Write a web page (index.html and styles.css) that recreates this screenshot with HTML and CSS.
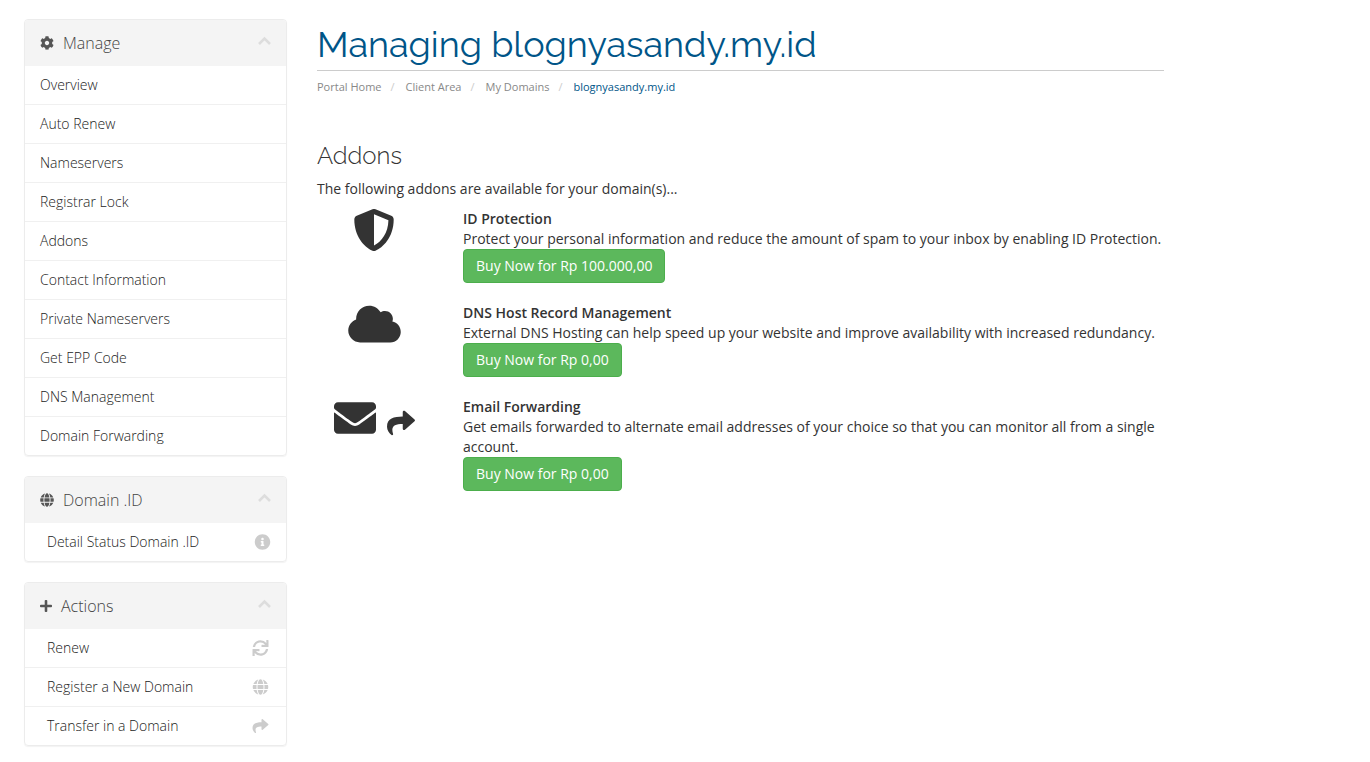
FILE: index.html
```
<!DOCTYPE html>
<html lang="en">
<head>
    <meta charset="UTF-8">
    <meta name="viewport" content="width=device-width, initial-scale=1.0">
    <title>Managing blognyasandy.my.id</title>
    <link rel="stylesheet" href="styles.css">
</head>
<body>

    <!-- shared icons -->
    <svg class="sprite" aria-hidden="true">
        <symbol id="cog" viewBox="0 0 512 512"><path d="M487.4 315.7l-42.6-24.6c4.3-23.2 4.3-47 0-70.2l42.6-24.6c4.9-2.8 7.1-8.6 5.5-14-11.1-35.6-30-67.8-54.7-94.6-3.8-4.1-10-5.1-14.8-2.3L380.8 110c-17.9-15.4-38.5-27.3-60.8-35.1V25.8c0-5.6-3.9-10.5-9.4-11.7-36.7-8.2-74.3-7.8-109.2 0-5.5 1.2-9.4 6.1-9.4 11.7V75c-22.2 7.9-42.8 19.8-60.8 35.1L88.7 85.5c-4.9-2.8-11-1.9-14.8 2.3-24.7 26.7-43.6 58.9-54.7 94.6-1.7 5.4.6 11.2 5.5 14L67.3 221c-4.3 23.2-4.3 47 0 70.2l-42.6 24.6c-4.9 2.8-7.1 8.6-5.5 14 11.1 35.6 30 67.8 54.7 94.6 3.8 4.1 10 5.1 14.8 2.3l42.6-24.6c17.9 15.4 38.5 27.3 60.8 35.1v49.2c0 5.6 3.9 10.5 9.4 11.7 36.7 8.2 74.3 7.8 109.2 0 5.5-1.2 9.4-6.1 9.4-11.7v-49.2c22.2-7.9 42.8-19.8 60.8-35.1l42.6 24.6c4.9 2.8 11 1.9 14.8-2.3 24.7-26.7 43.6-58.9 54.7-94.6 1.5-5.5-.7-11.3-5.6-14.1zM256 336c-44.1 0-80-35.9-80-80s35.9-80 80-80 80 35.9 80 80-35.9 80-80 80z"/></symbol>
        <symbol id="globe" viewBox="0 0 496 512"><path d="M336.5 160C322 70.7 287.8 8 248 8s-74 62.7-88.5 152h177zM152 256c0 22.2 1.2 43.5 3.3 64h185.3c2.1-20.5 3.3-41.8 3.3-64s-1.2-43.5-3.3-64H155.3c-2.1 20.5-3.3 41.8-3.3 64zm324.7-96c-28.6-67.9-86.5-120.4-158-141.6 24.4 33.8 41.2 84.7 50 141.6h108zM177.2 18.4C105.8 39.6 47.8 92.1 19.3 160h108c8.7-56.9 25.5-107.8 49.9-141.6zM487.4 192H372.7c2.1 21 3.3 42.5 3.3 64s-1.2 43-3.3 64h114.6c5.5-20.5 8.6-41.8 8.6-64s-3.1-43.5-8.5-64zM120 256c0-21.5 1.2-43 3.3-64H8.6C3.2 212.5 0 233.8 0 256s3.2 43.5 8.6 64h114.6c-2-21-3.2-42.5-3.2-64zm39.5 96c14.5 89.3 48.7 152 88.5 152s74-62.7 88.5-152h-177zm159.3 141.6c71.4-21.2 129.4-73.7 158-141.6h-108c-8.8 56.9-25.6 107.8-50 141.6zM19.3 352c28.6 67.9 86.5 120.4 158 141.6-24.4-33.8-41.2-84.7-50-141.6h-108z"/></symbol>
        <symbol id="plus" viewBox="0 0 448 512"><path d="M416 208H272V64c0-17.67-14.33-32-32-32h-32c-17.67 0-32 14.33-32 32v144H32c-17.67 0-32 14.33-32 32v32c0 17.67 14.33 32 32 32h144v144c0 17.67 14.33 32 32 32h32c17.67 0 32-14.33 32-32V304h144c17.67 0 32-14.33 32-32v-32c0-17.67-14.33-32-32-32z"/></symbol>
        <symbol id="chevron" viewBox="0 0 14 14"><path d="M2 10l5.5-5.5L13 10" fill="none" stroke="currentColor" stroke-width="2.6"/></symbol>
        <symbol id="info" viewBox="0 0 512 512"><path d="M256 8C119.043 8 8 119.083 8 256c0 136.997 111.043 248 248 248s248-111.003 248-248C504 119.083 392.957 8 256 8zm0 110c23.196 0 42 18.804 42 42s-18.804 42-42 42-42-18.804-42-42 18.804-42 42-42zm56 254c0 6.627-5.373 12-12 12h-88c-6.627 0-12-5.373-12-12v-24c0-6.627 5.373-12 12-12h12v-64h-12c-6.627 0-12-5.373-12-12v-24c0-6.627 5.373-12 12-12h64c6.627 0 12 5.373 12 12v100h12c6.627 0 12 5.373 12 12v24z"/></symbol>
        <symbol id="sync" viewBox="0 0 512 512"><path d="M440.65 12.57l4 82.77A247.16 247.16 0 0 0 255.83 8C134.73 8 33.91 94.92 12.29 209.82A12 12 0 0 0 24.09 224h49.05a12 12 0 0 0 11.67-9.26 175.91 175.91 0 0 1 317-56.94l-101.46-4.86a12 12 0 0 0-12.57 12v47.41a12 12 0 0 0 12 12H500a12 12 0 0 0 12-12V12a12 12 0 0 0-12-12h-47.37a12 12 0 0 0-11.98 12.57zM255.83 432a175.61 175.61 0 0 1-146-77.8l101.8 4.87a12 12 0 0 0 12.57-12v-47.4a12 12 0 0 0-12-12H12a12 12 0 0 0-12 12V500a12 12 0 0 0 12 12h47.35a12 12 0 0 0 12-12.6l-4.15-82.57A247.17 247.17 0 0 0 255.83 504c121.11 0 221.93-86.92 243.55-201.82a12 12 0 0 0-11.8-14.18h-49.05a12 12 0 0 0-11.67 9.26A175.86 175.86 0 0 1 255.83 432z"/></symbol>
        <symbol id="share" viewBox="0 0 512 512"><path d="M503.691 189.836L327.687 37.851C312.281 24.546 288 35.347 288 56.015v80.053C127.371 137.907 0 170.1 0 322.326c0 61.441 39.581 122.309 83.333 154.132 13.653 9.931 33.111-2.533 28.077-18.631C66.066 312.814 132.917 274.316 288 272.085V360c0 20.7 24.3 31.453 39.687 18.164l176.004-152c11.071-9.562 11.086-26.753 0-36.328z"/></symbol>
        <symbol id="shield" viewBox="0 0 512 512"><path d="M466.5 83.7l-192-80a48.15 48.15 0 0 0-36.9 0l-192 80C27.7 91.1 16 108.6 16 128c0 198.5 114.5 335.7 221.5 380.3 11.8 4.9 25.1 4.9 36.9 0C360.1 472.6 496 349.3 496 128c0-19.4-11.7-36.9-29.5-44.3zM256.1 446.3l-.1-381 175.9 73.3c-3.3 151.4-82.1 261.1-175.8 307.7z"/></symbol>
        <symbol id="cloud" viewBox="0 0 640 512"><path d="M537.6 226.6c4.1-10.7 6.4-22.4 6.4-34.6 0-53-43-96-96-96-19.7 0-38.1 6-53.3 16.2C367 64.2 315.3 32 256 32c-88.4 0-160 71.6-160 160 0 2.7.1 5.4.2 8.1C40.2 219.8 0 273.2 0 336c0 79.5 64.5 144 144 144h368c70.7 0 128-57.3 128-128 0-61.9-44-113.6-102.4-125.4z"/></symbol>
        <symbol id="envelope" viewBox="0 0 512 512"><path d="M502.3 190.8c3.9-3.1 9.7-.2 9.7 4.7V400c0 26.5-21.5 48-48 48H48c-26.5 0-48-21.5-48-48V195.6c0-5 5.7-7.8 9.7-4.7 22.4 17.4 52.1 39.5 154.1 113.6 21.1 15.4 56.7 47.8 92.2 47.6 35.7.3 72-32.8 92.3-47.6 102-74.1 131.6-96.3 154-113.7zM256 320c23.2.4 56.6-29.2 73.4-41.4 132.7-96.3 142.8-104.7 173.4-128.7 5.8-4.5 9.2-11.5 9.2-18.9v-19c0-26.5-21.5-48-48-48H48c-26.5 0-48 21.5-48 48v19c0 7.4 3.4 14.3 9.2 18.9 30.6 23.9 40.7 32.4 173.4 128.7 16.8 12.2 50.2 41.8 73.4 41.4z"/></symbol>
    </svg>

    <div class="container">
        <aside class="sidebar">
            <section class="panel">
                <h3 class="panel-heading"><svg class="icon"><use href="#cog"/></svg>Manage<svg class="chevron"><use href="#chevron"/></svg></h3>
                <nav class="list">
                    <a href="#">Overview</a>
                    <a href="#">Auto Renew</a>
                    <a href="#">Nameservers</a>
                    <a href="#">Registrar Lock</a>
                    <a href="#">Addons</a>
                    <a href="#">Contact Information</a>
                    <a href="#">Private Nameservers</a>
                    <a href="#">Get EPP Code</a>
                    <a href="#">DNS Management</a>
                    <a href="#">Domain Forwarding</a>
                </nav>
            </section>

            <section class="panel">
                <h3 class="panel-heading"><svg class="icon"><use href="#globe"/></svg>Domain .ID<svg class="chevron"><use href="#chevron"/></svg></h3>
                <nav class="list list-icons">
                    <a href="#">Detail Status Domain .ID<svg class="icon-right"><use href="#info"/></svg></a>
                </nav>
            </section>

            <section class="panel">
                <h3 class="panel-heading"><svg class="icon icon-plus"><use href="#plus"/></svg>Actions<svg class="chevron"><use href="#chevron"/></svg></h3>
                <nav class="list list-icons list-actions">
                    <a href="#">Renew<svg class="icon-right"><use href="#sync"/></svg></a>
                    <a href="#">Register a New Domain<svg class="icon-right"><use href="#globe"/></svg></a>
                    <a href="#">Transfer in a Domain<svg class="icon-right"><use href="#share"/></svg></a>
                </nav>
            </section>
        </aside>

        <main class="content">
            <h1>Managing blognyasandy.my.id</h1>
            <ol class="breadcrumb">
                <li><a href="#">Portal Home</a></li>
                <li><a href="#">Client Area</a></li>
                <li><a href="#">My Domains</a></li>
                <li class="active">blognyasandy.my.id</li>
            </ol>

            <h2>Addons</h2>
            <p class="intro">The following addons are available for your domain(s)...</p>

            <div class="addon">
                <div class="addon-icon"><svg class="big"><use href="#shield"/></svg></div>
                <div class="addon-text">
                    <strong>ID Protection</strong>
                    <p>Protect your personal information and reduce the amount of spam to your inbox by enabling ID Protection.</p>
                    <button type="button" class="btn">Buy Now for Rp 100.000,00</button>
                </div>
            </div>

            <div class="addon">
                <div class="addon-icon"><svg class="big wide"><use href="#cloud"/></svg></div>
                <div class="addon-text">
                    <strong>DNS Host Record Management</strong>
                    <p>External DNS Hosting can help speed up your website and improve availability with increased redundancy.</p>
                    <button type="button" class="btn">Buy Now for Rp 0,00</button>
                </div>
            </div>

            <div class="addon">
                <div class="addon-icon"><svg class="big"><use href="#envelope"/></svg><svg class="medium"><use href="#share"/></svg></div>
                <div class="addon-text">
                    <strong>Email Forwarding</strong>
                    <p>Get emails forwarded to alternate email addresses of your choice so that you can monitor all from a single account.</p>
                    <button type="button" class="btn">Buy Now for Rp 0,00</button>
                </div>
            </div>
        </main>
    </div>

</body>
</html>
```

FILE: styles.css
```
* {
    box-sizing: border-box;
}

body {
    margin: 0;
    background: #fff;
    color: #333;
    font-family: "Open Sans", Verdana, sans-serif;
    font-size: 14px;
    line-height: 20px;
}

h1, h2, h3, p, ol {
    margin: 0;
    padding: 0;
}

a {
    color: inherit;
    text-decoration: none;
}

svg {
    fill: currentColor;
    flex: none;
}

.sprite {
    display: none;
}

.container {
    display: flex;
    gap: 30px;
    max-width: 1164px;
    padding: 19px 0 16px 24px;
}

/* sidebar */
.sidebar {
    flex: 0 0 263px;
}

.panel {
    margin-bottom: 20px;
    border: 1px solid #ececec;
    border-radius: 4px;
    box-shadow: 0 1px 1px rgba(0, 0, 0, 0.05);
    color: #222;
}

.panel:last-child {
    margin-bottom: 0;
}

.panel-heading {
    display: flex;
    align-items: center;
    height: 46px;
    padding: 0 15px;
    background: #f4f4f4;
    border-radius: 3px 3px 0 0;
    color: #444;
    font-size: 16px;
    font-weight: 300;
}

.icon {
    width: 14px;
    height: 14px;
    margin-right: 9px;
    color: #555;
}

.icon-plus {
    width: 12px;
}

.chevron {
    width: 14px;
    height: 14px;
    margin: 0 0 4px auto;
    color: #ddd;
}

.list a {
    display: flex;
    align-items: center;
    justify-content: space-between;
    height: 39px;
    padding: 0 15px;
    border-bottom: 1px solid #f0f0f0;
    font-weight: 300;
}

.list a:last-child {
    height: 38px;
    border-bottom: 0;
}

.list-icons a {
    padding-left: 22px;
}

.list-actions a {
    padding-right: 17px;
}

.icon-right {
    width: 17px;
    height: 16px;
    color: #ccc;
}

/* main column */
.content {
    flex: 1;
    min-width: 0;
}

h1 {
    padding: 5px 0 6px;
    border-bottom: 1px solid #ccc;
    color: #058;
    font-family: Raleway, Lato, sans-serif;
    font-size: 36px;
    font-weight: 400;
    line-height: 40px;
}

.breadcrumb {
    display: flex;
    padding: 6px 0;
    list-style: none;
    color: #888;
    font-size: 11px;
}

.breadcrumb li + li::before {
    content: "/";
    padding: 0 11px 0 9px;
    color: #ccc;
}

.breadcrumb .active {
    color: #058;
}

h2 {
    margin: 40px 0 10px;
    font-family: Raleway, Lato, sans-serif;
    font-size: 24px;
    font-weight: 300;
    line-height: 26px;
}

.intro {
    margin-bottom: 10px;
}

.addon {
    display: flex;
    gap: 32px;
    margin-bottom: 20px;
}

.addon-icon {
    display: flex;
    justify-content: center;
    align-items: flex-start;
    flex: 0 0 114px;
    gap: 11px;
}

.big {
    width: 42px;
    height: 42px;
}

.wide {
    width: 53px;
}

.medium {
    width: 28px;
    height: 28px;
    margin-top: 12px;
}

.addon-text {
    flex: 1;
}

.addon strong {
    font-weight: 600;
}

.btn {
    display: block;
    height: 34px;
    padding: 0 12px;
    background: #5cb85c;
    border: 1px solid #4cae4c;
    border-radius: 4px;
    color: #fff;
    font-family: inherit;
    font-size: 14px;
    font-weight: 500;
    line-height: 20px;
}
```
